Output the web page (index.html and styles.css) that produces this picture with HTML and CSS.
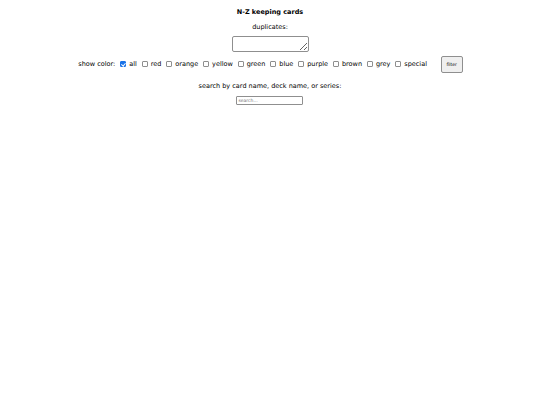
FILE: index.html
```html
<!DOCTYPE html>
<html>
<head>
<meta charset="utf-8">
<link rel="stylesheet" href="styles.css">
</head>
<body>
<div class="page">
  <h1 class="title">N-Z keeping cards</h1>
  <div class="dup">
    <label class="dup-label">duplicates:</label>
    <textarea class="dup-box"></textarea>
  </div>
  <form class="filters">
    <span class="show">show color:</span>
    <label class="opt"><input type="checkbox" checked> all</label>
    <label class="opt"><input type="checkbox"> red</label>
    <label class="opt"><input type="checkbox"> orange</label>
    <label class="opt"><input type="checkbox"> yellow</label>
    <label class="opt"><input type="checkbox"> green</label>
    <label class="opt"><input type="checkbox"> blue</label>
    <label class="opt"><input type="checkbox"> purple</label>
    <label class="opt"><input type="checkbox"> brown</label>
    <label class="opt"><input type="checkbox"> grey</label>
    <label class="opt"><input type="checkbox"> special</label>
    <button type="button" class="filter-btn">filter</button>
  </form>
  <div class="search">
    <p class="search-label">search by card name, deck name, or series:</p>
    <input type="text" class="search-box" placeholder="search...">
  </div>
</div>
</body>
</html>
```

FILE: styles.css
```css
html, body {
  margin: 0;
  padding: 0;
  background: #fff;
}
body {
  font-family: "DejaVu Sans", Verdana, sans-serif;
  font-size: 6.5px;
  color: #000;
}
.page {
  display: flex;
  flex-direction: column;
  align-items: center;
  padding-top: 8px;
}
.title {
  margin: 0;
  font-size: 6.5px;
  font-weight: bold;
  line-height: 8px;
}
.dup {
  display: flex;
  flex-direction: column;
  align-items: center;
  margin-top: 7px;
  gap: 5px;
}
.dup-label {
  line-height: 8px;
}
.dup-box {
  width: 77px;
  height: 16px;
  box-sizing: border-box;
  margin: 0;
  padding: 1px;
  border: 1px solid #8f8f8f;
  border-radius: 2px;
  font-size: 6px;
  resize: both;
}
.filters {
  display: flex;
  align-items: center;
  margin: 4px 0 0;
  height: 17px;
  padding-left: 1px;
}
.show {
  margin-right: 5px;
  padding-bottom: 1px;
}
.opt {
  display: flex;
  align-items: center;
  margin-right: 4.8px;
  white-space: pre;
  padding-bottom: 1px;
}
.opt input {
  appearance: none;
  -webkit-appearance: none;
  box-sizing: border-box;
  width: 6px;
  height: 6px;
  margin: 0 1px 0 0;
  border: 1px solid #8f8f8f;
  border-radius: 1px;
  background: #fff;
  position: relative;
}
.opt input:checked {
  background: #1a73e8;
  border-color: #1a73e8;
}
.opt input:checked::after {
  content: "";
  position: absolute;
  left: 1px;
  top: 0px;
  width: 1.5px;
  height: 3px;
  border: solid #fff;
  border-width: 0 1px 1px 0;
  transform: rotate(40deg);
}
.filter-btn {
  margin-left: 9px;
  width: 22px;
  height: 17px;
  padding: 0;
  font-family: "DejaVu Sans", Verdana, sans-serif;
  font-size: 4.5px;
  color: #000;
  border: 1px solid #8f8f8f;
  border-radius: 2px;
  background: #efefef;
}
.search {
  display: flex;
  flex-direction: column;
  align-items: center;
}
.search-label {
  margin: 9px 0 6px;
  line-height: 8px;
}
.search-box {
  width: 67px;
  height: 9px;
  box-sizing: border-box;
  margin: 0;
  padding: 0 1px;
  font-size: 4.5px;
  font-family: "DejaVu Sans", Verdana, sans-serif;
  border: 1px solid #8f8f8f;
  border-radius: 1px;
}
```
